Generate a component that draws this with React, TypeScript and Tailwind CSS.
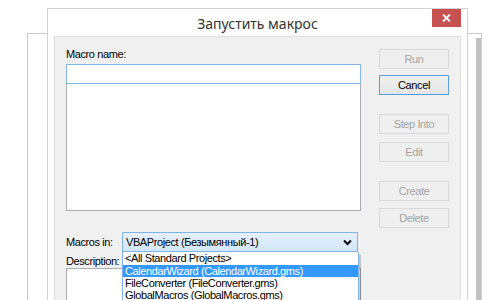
import React from "react";

const ui = { fontFamily: '"Liberation Sans", Arial, sans-serif' };

function Btn({ label, enabled = false, focused = false }: { label: string; enabled?: boolean; focused?: boolean }) {
  return (
    <div
      className={
        "h-[20px] w-[70px] flex items-center justify-center text-[11px] tracking-[-0.4px] border " +
        (focused
          ? "border-[#5b9de2] bg-gradient-to-b from-[#f0f0f0] to-[#e5e5e5] text-black"
          : enabled
          ? "border-[#acacac] bg-gradient-to-b from-[#f0f0f0] to-[#e5e5e5] text-black"
          : "border-[#d9d9d9] bg-[#efefef] text-[#a3a3a3]")
      }
    >
      {label}
    </div>
  );
}

export default function App() {
  return (
    <div className="relative w-[500px] h-[300px] bg-white overflow-hidden" style={ui}>
      {/* back window */}
      <div className="absolute left-[27px] top-[33px] w-[455px] h-[300px] border border-[#cacaca] bg-white flex justify-end">
        <div className="mt-[4px] w-[5px] h-full bg-[#c2c2c2]" />
      </div>

      {/* main dialog */}
      <div className="absolute left-[47px] top-[8px] w-[421px] h-[340px] border border-[#d2d2d2] bg-white flex flex-col">
        <div className="relative shrink-0 h-[27px] flex items-center justify-center">
          <span
            className="text-[14px] text-[#333333] mt-[2px]"
            style={{ fontFamily: '"Noto Sans", "Open Sans", sans-serif' }}
          >
            Запустить макрос
          </span>
          <div className="absolute right-[6px] top-[0px] w-[29px] h-[18px] bg-[#c75050] flex items-center justify-center">
            <svg width="9" height="8" viewBox="0 0 9 8">
              <path d="M1 0.5 L8 7.5 M8 0.5 L1 7.5" stroke="white" strokeWidth="1.8" />
            </svg>
          </div>
        </div>

        <div className="mx-[6px] flex-1 border border-[#dedede] bg-[#f0f0f0] flex pl-[11px] pr-[10px] pt-[10px] gap-[18px]">
          {/* left column */}
          <div className="w-[295px] shrink-0 flex flex-col">
            <div className="h-[14px] shrink-0 leading-[14px] text-[11px] tracking-[-0.4px] text-black">Macro name:</div>
            <div className="mt-[3px] shrink-0 h-[20px] border border-[#84b7e9] bg-white" />
            <div className="h-[127px] shrink-0 border border-[#abadb3] border-t-0 bg-white" />

            <div className="mt-[21px] shrink-0 flex items-center relative">
              <div className="w-[56px] text-[11px] tracking-[-0.4px] text-black">Macros in:</div>
              <div className="relative">
                <div className="w-[236px] h-[20px] border border-[#7eb4ea] bg-gradient-to-b from-[#e6f1fc] to-[#d2e6fb] flex items-center pl-[3px] pr-[5px] justify-between">
                  <span className="text-[11px] tracking-[-0.4px] text-black">VBAProject (Безымянный-1)</span>
                  <svg width="9" height="7" viewBox="0 0 9 7">
                    <path d="M1 1.5 L4.5 5 L8 1.5" stroke="black" strokeWidth="2" fill="none" />
                  </svg>
                </div>
                {/* dropdown list overlay */}
                <div className="absolute left-0 top-[20px] w-[237px] h-[60px] border border-[#7eb4ea] border-t-0 bg-white z-10 shadow-[2px_3px_0_rgba(0,0,0,0.18)]">
                  <div className="h-[13px] leading-[13px] pl-[2px] text-[11px] tracking-[-0.4px] text-black">&lt;All Standard Projects&gt;</div>
                  <div className="h-[12px] leading-[12px] pl-[2px] text-[11px] tracking-[-0.4px] text-white bg-[#3399ff]">CalendarWizard (CalendarWizard.gms)</div>
                  <div className="h-[12px] leading-[12px] pl-[2px] text-[11px] tracking-[-0.4px] text-black">FileConverter (FileConverter.gms)</div>
                  <div className="h-[12px] leading-[12px] pl-[2px] text-[11px] tracking-[-0.4px] text-black">GlobalMacros (GlobalMacros.gms)</div>
                </div>
              </div>
            </div>

            <div className="mt-[2px] shrink-0 h-[14px] leading-[14px] text-[11px] tracking-[-0.4px] text-black">Description:</div>
            <div className="h-[60px] shrink-0 border border-[#abadb3] bg-white" />
          </div>

          {/* right column */}
          <div className="flex flex-col pt-[2px]">
            <Btn label="Run" />
            <div className="mt-[6px]">
              <Btn label="Cancel" focused />
            </div>
            <div className="mt-[19px]">
              <Btn label="Step Into" />
            </div>
            <div className="mt-[8px]">
              <Btn label="Edit" />
            </div>
            <div className="mt-[19px]">
              <Btn label="Create" />
            </div>
            <div className="mt-[7px]">
              <Btn label="Delete" />
            </div>
          </div>
        </div>
      </div>
    </div>
  );
}
